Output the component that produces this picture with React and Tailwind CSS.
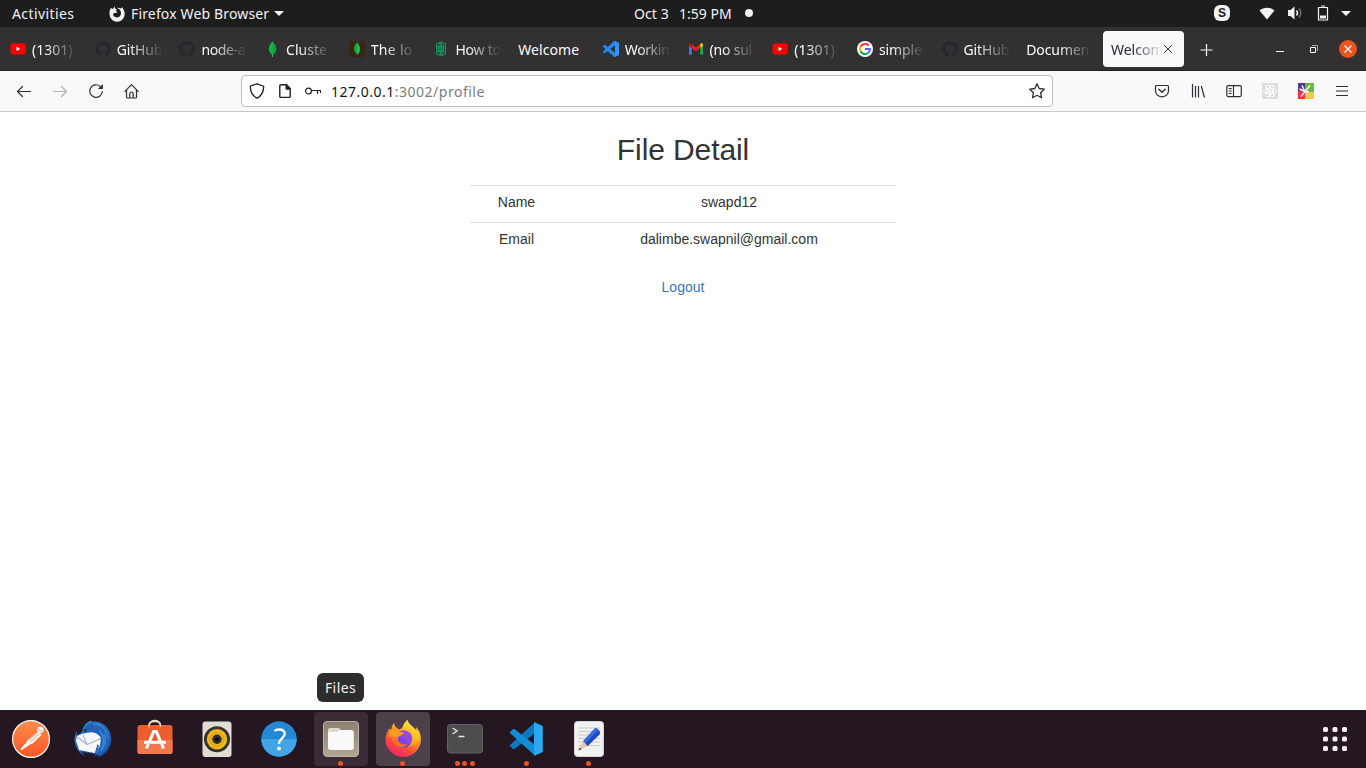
import React from "react";
import { FaGithub } from "react-icons/fa";

const VS_PATH =
  "M23.15 2.587L18.21.21a1.494 1.494 0 0 0-1.705.29l-9.46 8.63-4.12-3.128a.999.999 0 0 0-1.276.057L.327 7.261A1 1 0 0 0 .326 8.74L3.899 12 .326 15.26a1 1 0 0 0 .001 1.479L1.65 17.94a.999.999 0 0 0 1.276.057l4.12-3.128 9.46 8.63a1.492 1.492 0 0 0 1.704.29l4.942-2.377A1.5 1.5 0 0 0 24 20.06V3.939a1.5 1.5 0 0 0-.85-1.352zm-5.146 14.861L10.826 12l7.178-5.448v10.896z";

function Svg({ children, size = "size-4", box = "0 0 16 16" }) {
  return (
    <svg viewBox={box} className={`${size} block shrink-0`} fill="none">
      {children}
    </svg>
  );
}

/* ---------- favicons ---------- */
const Youtube = () => (
  <Svg>
    <rect x="0.500" y="2.200" width="15.300" height="11.400" rx="3" fill="#f00" />
    <path d="M6.500 5.800v4.200l3.800-2.100z" fill="#fff" />
  </Svg>
);
const Github = () => <FaGithub className="size-4 shrink-0 text-[#24292e]" />;
const Leaf = () => (
  <Svg>
    <path d="M8.500 .2C7.100 2.300 4.800 4.200 4.800 8c0 3 2 4.700 3.200 5.600L8.300 16h.6l.2-2.400C10.500 12.600 12.200 11 12.200 8 12.200 4.200 9.500 2.500 8.500 .2z" fill="#10b63c" />
    <path d="M8.500 .2v13.600C10.500 12.600 12.200 11 12.200 8 12.200 4.200 9.500 2.500 8.500 .2z" fill="#10a33c" />
    <path d="M8.300 13.200h.5l.1 2.800h-.6z" fill="#98a4a2" />
  </Svg>
);
const LeafDark = () => (
  <Svg>
    <path d="M0 0h16v16H0z" fill="#3a2517" />
    <path d="M8 1.200C6.700 3 5 5 5 8c0 2.500 1.600 4 2.700 4.800L8 15c.2-1 .2-2 .4-2.200C9.500 12 11 10.500 11 8c0-3-1.900-4.800-3-6.800z" fill="#13aa42" />
    <path d="M8 1.200V14c1.500-1.300 3-3 3-6 0-3-1.900-4.800-3-6.800z" fill="#0fc34a" />
  </Svg>
);
const Geeks = () => (
  <Svg>
    <path d="M7.700 1.500 3.700 2.800v10.400l4 1.300M8.300 1.500l4 1.300v10.400l-4 1.300M7.200 .8v14.400M8.800 .8v14.400M6.500 4.800l-1 .5v5.400l1 .5M9.500 4.800l1 .5v5.400l-1 .5" stroke="#12a066" strokeWidth="1.100" />
  </Svg>
);
const Code = () => (
  <Svg box="0 0 24 24">
    <path d={VS_PATH} fill="#2489f5" />
    <path d="m17 .3 1.200-.1 4.900 2.400a1.500 1.500 0 0 1 .9 1.400v16a1.500 1.500 0 0 1-.9 1.400l-4.900 2.400-1.200-.5 1-5.900V6.500z" fill="#3093ff" />
  </Svg>
);
const Gmail = () => (
  <Svg>
    <path d="M1 13.700h2.800V7L1 4.900z" fill="#5a6cff" />
    <path d="M12.200 13.700H15V4.900L12.200 7z" fill="#10b04b" />
    <path d="M3.800 7 8 10.200 12.200 7V3.300L8 6.500 3.800 3.300z" fill="#fa1b1f" />
    <path d="M1 5V3.500C1 2.300 2.400 1.800 3.300 2.700l.5.5V7L1 5z" fill="#c5121f" />
    <path d="M15 5V3.500c0-1.200-1.400-1.700-2.300-.8l-.5.5V7L15 5z" fill="#fbcc04" />
  </Svg>
);
const Google = () => (
  <Svg>
    <circle cx="8" cy="8" r="8" fill="#fff" />
    <path d="M3.500 5.700A5 5 0 0 1 11.700 4.500" stroke="#f33" strokeWidth="2" />
    <path d="M3.500 10.300a5 5 0 0 1 0-4.600" stroke="#fbbc04" strokeWidth="2" />
    <path d="M3.500 10.300A5 5 0 0 0 11 12" stroke="#10a84e" strokeWidth="2" />
    <path d="M8 8h5c0 1.700-.7 3.200-2 4" stroke="#5a64f8" strokeWidth="2" />
  </Svg>
);

const TABS = [
  [Youtube, "(1301)", "tracking-[0px]"],
  [Github, "GitHub", "tracking-[-0.15px]"],
  [Github, "node-a", "tracking-[-0.35px]"],
  [Leaf, "Cluste", "tracking-[0px]"],
  [LeafDark, "The lo", "tracking-[0.3px]"],
  [Geeks, "How to", "tracking-[-0.25px]"],
  [null, "Welcome", "tracking-[0.1px]"],
  [Code, "Workin", "tracking-[-0.4px]"],
  [Gmail, "(no sul", "tracking-[-0.2px]"],
  [Youtube, "(1301)", "tracking-[0px]"],
  [Google, "simple", "tracking-[-0.1px]"],
  [Github, "GitHub", "tracking-[-0.15px]"],
  [null, "Documen", "tracking-[-0.1px]"],
];

function Tab({ icon: Icon, label, tracking }) {
  let fade = "[mask-image:linear-gradient(to_right,#000_12px,transparent_46px)]";
  if (!Icon) fade = "[mask-image:linear-gradient(to_right,#000_32px,transparent_66px)]";
  if (label === "Welcome") fade = "";
  return (
    <div className="flex h-9 w-[84.69px] shrink-0 items-center gap-1.5 pr-[3px] pl-[10px] text-[#fbfbfb]">
      {Icon && <Icon />}
      <div className={`min-w-0 flex-1 pt-0.5 whitespace-nowrap ${fade} ${tracking}`}>{label}</div>
    </div>
  );
}

/* ---------- top panel ---------- */
function TopPanel() {
  return (
    <div className="flex h-[27px] shrink-0 items-center bg-[#1d1d1d] text-[14px] whitespace-nowrap text-[#f2f2f2]">
      <div className="w-[109px] shrink-0 pl-3 tracking-[0.4px]">Activities</div>
      <div className="flex w-[525px] shrink-0 items-center">
        <Svg>
          <path d="M5.300 0C5 1.500 4.700 2 4 2.900L2 2C.8 3.600.3 5.500.5 8.100a7.600 7.600 0 1 0 15.200 0c0-2-.6-3.800-1.700-5-.1-.8-.4-1.500-.8-2-.3 1-.8 1.400-1.500 1.500-1-.7-2-.9-3.500-.7 2 .7 3.400 2 3.700 4.300.4 3-1.400 5.200-3.900 5.200-2.300 0-3.900-1.500-3.900-3.100 0-.9.800-1.500 1.700-1.400 1 .2 2 .1 2.700-.8-.8-.2-1.500-.6-1.700-1.300.3-.6 1-.8 1-1.600-1.300 0-2-.9-2.500-3.200z" fill="#f2f2f2" />
        </Svg>
        <span className="ml-[6px] w-[143px] tracking-[0.15px]">Firefox Web Browser</span>
        <Svg size="h-[5px] w-[10px]" box="0 0 10 5">
          <path d="M0 0h10L5 5z" fill="#f2f2f2" />
        </Svg>
      </div>
      <span className="w-[45px] shrink-0 pb-px tracking-[0.1px]">Oct 3</span>
      <span className="w-[66px] shrink-0 pb-px">1:59 PM</span>
      <span className="mb-px size-2 shrink-0 rounded-full bg-[#f2f2f2]" />
      <div className="ml-auto flex items-center pr-[15px]">
        <div className="mb-px flex size-4 items-center justify-center rounded-[6px] bg-[#f2f2f2] font-['Liberation_Sans',sans-serif] text-[12px] font-bold text-[#1d1d1d]">S</div>
        <div className="ml-[29px]">
          <Svg>
            <path d="M.5 4.500C4.500.8 11.500.8 15.500 4.500L8 13.500z" fill="#f2f2f2" />
          </Svg>
        </div>
        <div className="ml-3 mb-px">
          <Svg>
            <path d="M1 5h2.500L7.500 1.500v13L3.500 11H1z" fill="#f2f2f2" />
            <path d="M9.500 5.500q2 2.500 0 5" stroke="#f2f2f2" strokeWidth="1.500" />
            <path d="M12 3.500q3.500 4.500 0 9" stroke="#777" strokeWidth="1.300" />
          </Svg>
        </div>
        <div className="ml-3 mb-px">
          <Svg>
            <path d="M3.500 2.500h9v12.500h-9zM6 1h4" stroke="#f2f2f2" strokeWidth="1.200" />
            <path d="M5 10.500h6v3H5z" fill="#f2f2f2" />
          </Svg>
        </div>
        <div className="ml-[10px]">
          <Svg size="h-[5px] w-[10px]" box="0 0 10 5">
            <path d="M0 0h10L5 5z" fill="#f2f2f2" />
          </Svg>
        </div>
      </div>
    </div>
  );
}

function TabStrip() {
  return (
    <div className="flex h-11 shrink-0 items-center border-b border-[#211e1f] bg-[#333031] text-[14px]">
      {TABS.map(([icon, label, tracking], i) => (
        <Tab key={i} icon={icon} label={label} tracking={tracking} />
      ))}
      <div className="ml-[2px] flex h-9 w-[81px] shrink-0 items-center rounded bg-[#f9f9fb] pl-2 text-[#2a2a2e]">
        <div className="w-[52px] pt-0.5 whitespace-nowrap [mask-image:linear-gradient(to_right,#000_22px,transparent_52px)]">Welcom</div>
        <Svg size="size-[10px]" box="0 0 10 10">
          <path d="m1.200 1.200 7.600 7.600m0-7.600-7.600 7.600" stroke="#333" strokeWidth="1" />
        </Svg>
      </div>
      <div className="flex flex-1 items-center pl-[14px]">
        <div className="mt-0.5">
          <Svg>
            <path d="M8.500 2v12M2.500 8h12" stroke="#fbfbfb" strokeWidth="1.200" />
          </Svg>
        </div>
        <div className="ml-[58px]">
          <Svg>
            <path d="M4 10.500h8" stroke="#fbfbfb" />
          </Svg>
        </div>
        <div className="ml-[18px]">
          <Svg>
            <path d="M4.500 6.500h5v5h-5z" stroke="#fbfbfb" />
            <path d="M6 4.500h5.500V10" stroke="#aaa" />
          </Svg>
        </div>
        <div className="ml-[17px] flex size-[18px] items-center justify-center rounded-full bg-[#e95420]">
          <Svg size="size-[10px]" box="0 0 10 10">
            <path d="m1.500 1.500 7 7m0-7-7 7" stroke="#fff" strokeWidth="1.200" />
          </Svg>
        </div>
      </div>
    </div>
  );
}

function Slot({ children }) {
  return <div className="flex w-9 justify-center">{children}</div>;
}

function Toolbar() {
  const s = "#2e2e33";
  return (
    <div className="flex h-[41px] shrink-0 items-center border-b border-[#c8c8c9] bg-[#f9f9fa]">
      <div className="flex w-[241px] pl-[6px]">
        <Slot>
          <Svg><path d="M14.500 8.500H1.500M6.500 3.500l-5 5 5 5" stroke={s} strokeWidth="1.200" strokeLinecap="round" strokeLinejoin="round" /></Svg>
        </Slot>
        <Slot>
          <Svg><path d="M1.500 8.500h13M9.500 3.500l5 5-5 5" stroke="#b1b1b5" strokeWidth="1.200" strokeLinecap="round" strokeLinejoin="round" /></Svg>
        </Slot>
        <Slot>
          <Svg>
            <path d="M14.300 8.500A6.300 6.300 0 1 1 12 3.200" stroke={s} strokeWidth="1.200" strokeLinecap="round" />
            <path d="M14.900 1v5h-5z" fill={s} />
          </Svg>
        </Slot>
        <Slot>
          <Svg><path d="m.9 8.300 6.600-6.600 6.600 6.600M2.500 7v7c0 .7.400 1 1 1h8c.6 0 1-.3 1-1V7M5.800 15v-4c0-1.300.6-2 1.700-2s1.700.7 1.700 2v4" stroke={s} strokeWidth="1.200" strokeLinecap="round" strokeLinejoin="round" /></Svg>
        </Slot>
      </div>
      <div className="flex h-8 w-[812px] items-center rounded-[4px] border border-[#bfbfc3] bg-white px-[7px] text-[14px]">
        <Svg><path d="M8 .8 14 3c.5 0 .7.400.7.900C14.500 9 12.500 13 8 15.200 3.500 13 1.500 9 1.300 3.900c0-.5.2-.8.7-1z" stroke="#222" strokeWidth="1.300" strokeLinejoin="round" /></Svg>
        <div className="ml-3">
          <Svg>
            <path d="M3.800 1.700h5.700l3.700 3.800v8c0 .6-.3.900-.9.900H3.700c-.6 0-.9-.3-.9-.9V2.600c0-.6.400-.9 1-.9z" stroke="#222" strokeWidth="1.400" />
            <path d="M9 1.500v4.700h4.700z" fill="#222" stroke="#222" />
          </Svg>
        </div>
        <div className="ml-3">
          <Svg>
            <circle cx="3.500" cy="8" r="2.900" stroke="#222" strokeWidth="1.200" />
            <path d="M6.500 7.500h9v2.500M12.500 7.500V11" stroke="#222" strokeWidth="1.200" />
          </Svg>
        </div>
        <div className="ml-[10px] flex-1 tracking-[0.5px] whitespace-nowrap text-[#7c7c80]">
          <span className="text-[#15141a]">127.0.0.1</span>:3002/profile
        </div>
        <Svg><path d="m8 .9 2.200 4.600 5 .7-3.600 3.500.9 5L8 12.300l-4.500 2.400.9-5L.8 6.200l5-.7z" stroke={s} strokeWidth="1.300" strokeLinejoin="round" /></Svg>
      </div>
      <div className="ml-auto flex pr-[6px]">
        <Slot>
          <Svg>
            <path d="M2.500 2.500h11c.6 0 1 .4 1 1v4c0 4-2.700 6.300-6.500 6.300S1.500 11.500 1.500 7.500v-4c0-.6.4-1 1-1z" stroke={s} strokeWidth="1.200" />
            <path d="m4.800 6.300 3.200 3 3.200-3" stroke={s} strokeWidth="1.400" strokeLinecap="round" strokeLinejoin="round" />
          </Svg>
        </Slot>
        <Slot>
          <Svg><path d="M2.500 1v13.500M5.500 3v11.500M8.500 3v11.500M11.300 3l3.200 11.500" stroke={s} strokeWidth="1.200" /></Svg>
        </Slot>
        <Slot>
          <Svg>
            <rect x=".8" y="2.600" width="14.500" height="11" rx="1.500" stroke={s} strokeWidth="1.200" />
            <path d="M7.500 2.600v11M2.700 5.500h3M2.700 8h3M2.700 10.500h3" stroke={s} strokeWidth="1.100" />
          </Svg>
        </Slot>
        <Slot>
          <Svg>
            <path d="M0 0h16v16H0z" fill="#dddde0" />
            <g stroke="#fff" strokeWidth="1">
              <ellipse cx="8" cy="8" rx="6.500" ry="2.500" />
              <ellipse cx="8" cy="8" rx="6.500" ry="2.500" transform="rotate(60 8 8)" />
              <ellipse cx="8" cy="8" rx="6.500" ry="2.500" transform="rotate(120 8 8)" />
            </g>
            <circle cx="8" cy="8" r="1.300" fill="#fff" />
          </Svg>
        </Slot>
        <Slot>
          <Svg>
            <path d="M0 0h7v9H0z" fill="#503a91" />
            <path d="M7 0h9v9H7z" fill="#6cb83a" />
            <path d="M0 8h7v8H0z" fill="#ef3340" />
            <path d="M7 9h9v7H7z" fill="#f3c64c" />
            <path d="m7 8.500 5-6M7 8.500 4 2.500M7 8.500 1.500 6M7 8.500l-4 5M7 8.500l4 .5" stroke="#fff" strokeWidth="1.400" />
          </Svg>
        </Slot>
        <Slot>
          <Svg><path d="M2 3.500h12M2 8h12M2 12.500h12" stroke={s} strokeWidth="1.200" /></Svg>
        </Slot>
      </div>
    </div>
  );
}

function Page() {
  return (
    <main className="flex flex-1 flex-col items-center bg-white pt-[21px] font-['Liberation_Sans',sans-serif] text-[14px] leading-5 text-[#333]">
      <h2 className="mb-[19px] text-[30px] leading-[33px] tracking-[-0.1px]">File Detail</h2>
      <table className="mb-[17px] w-[426px] table-fixed border-collapse text-center">
        <colgroup>
          <col className="w-[93px]" />
          <col />
        </colgroup>
        <tbody>
          <tr className="border-t border-[#ddd]">
            <td className="h-[37px] pb-1">Name</td>
            <td className="pr-px pb-1">swapd12</td>
          </tr>
          <tr className="border-t border-[#ddd]">
            <td className="h-[37px] pb-1">Email</td>
            <td className="pr-px pb-1">dalimbe.swapnil@gmail.com</td>
          </tr>
        </tbody>
      </table>
      <a className="text-[#337ab7]">Logout</a>
    </main>
  );
}

/* ---------- dock icons, each on a 40px board ---------- */
const DockSvg = ({ children }) => (
  <Svg size="size-10" box="0 0 40 40">{children}</Svg>
);
const Postman = () => (
  <DockSvg>
    <defs><linearGradient id="pm" x2="0" y2="1"><stop stopColor="#ff8e4b" /><stop offset="1" stopColor="#fd5527" /></linearGradient></defs>
    <circle cx="20" cy="20" r="18.400" fill="url(#pm)" stroke="#fff" strokeWidth="1.200" />
    <circle cx="29.300" cy="11" r="3.200" fill="#fff" />
    <path d="M27 12.500 30.500 16 21 25l-5.500-.5.5-3z" fill="#fff" />
    <path d="m17 23-7 7.500 9-6" stroke="#fff" strokeWidth="1.800" />
    <path d="m28 15-9 8.300m-1.500-1.800 9-8M26.800 9.500l4.700 4" stroke="#ff7040" strokeWidth=".8" />
  </DockSvg>
);
const Thunderbird = () => (
  <DockSvg>
    <defs><linearGradient id="tb" x1=".2" x2=".8" y2="1"><stop stopColor="#2a8fdc" /><stop offset=".5" stopColor="#2465bd" /><stop offset="1" stopColor="#123e8c" /></linearGradient></defs>
    <path d="M10 9C12 4.500 15 2 19 1.500l-1 1.300C26 1 34 6 37 13c2.500 7 1.500 14-3 19.500-2.500 3-5.500 5-9.500 6l2-2.500-6 1.500 2.500-2.500L9 33l3 4C5 34 1.500 27 1.500 20c0-3 1-6 2.500-8l-.5 5L9 13z" fill="url(#tb)" />
    <path d="M12 13.800 22.500 12.500 30 16.500 27 27l-3 7.500L6 31l-1.500-5-1.500-4 1-5z" fill="#f6f7fa" />
    <path d="m4.500 18 9.500 7.500 14-6M14 25.500 10 16" stroke="#a9b4c6" strokeWidth="1.100" />
    <path d="M10.500 14.500C10.500 9 13.500 4.500 20 3.500c9 0 17 8 16.500 18-.5 6.500-4.500 12-10.500 15.500l-1.500-3C27 29 28 24 27.500 18c-4-5-10-5.500-15.500-3.800z" fill="#2263b8" />
    <path d="M20 5c8-.5 14 6 15 14M26 11c5 5 6 13 2 21M31 15c3 7 1 12-3 17" stroke="#328ad7" strokeWidth="1.400" />
    <path d="m10.500 12.500 1.500-2.500 2 1-1.500 1.500z" fill="#17274a" />
    <path d="m24.500 25 2 2.500-1.500 1 1.500 2-2 1 .5 2.500-3.500 1z" fill="#2263b8" />
  </DockSvg>
);
const Software = () => (
  <DockSvg>
    <path d="M14 9V6.500C14 0 25.500 0 25.500 6.500V9" stroke="#f1d7b3" strokeWidth="1.700" />
    <rect x="2.500" y="6" width="35" height="29" rx="2.500" fill="#ed5e2d" />
    <path d="M2.500 21h35v11.500a2.500 2.500 0 0 1-2.500 2.500H5a2.500 2.500 0 0 1-2.500-2.500z" fill="#f1784d" />
    <path d="M14 8.500V6.500C14 1 25.500 1 25.500 6.500v1.500" stroke="#f1d7b3" strokeWidth="1.500" />
    <path d="M14.500 22.500 18.700 12.500h2.600l4.200 10M13.300 25 11.500 29.500M26.700 25l1.800 4.500" stroke="#fff" strokeWidth="3.200" />
    <path d="M9 23.300h22" stroke="#fff" strokeWidth="3" />
  </DockSvg>
);
const Rhythmbox = () => (
  <DockSvg>
    <rect x="5.500" y="2.500" width="29" height="35.500" rx="3" fill="#e2ddd3" />
    <circle cx="20" cy="20.300" r="13" fill="#34332f" />
    <circle cx="20" cy="20.300" r="10.200" fill="#f0b81c" />
    <circle cx="20" cy="20.300" r="6.800" stroke="#d49c12" strokeWidth="1" />
    <circle cx="20" cy="20.300" r="4.700" fill="#2c2c29" />
    <circle cx="20" cy="20.300" r="1.800" fill="#060606" />
  </DockSvg>
);
const Help = () => (
  <DockSvg>
    <circle cx="20" cy="20" r="17.700" fill="#2389d5" />
    <path d="M2.300 20h35.400a17.700 17.700 0 0 1-35.400 0z" fill="#43a4e3" />
    <path d="M15.500 12c1-1 2.500-1.500 4.500-1.500 4 0 5.700 2 5.700 4.500 0 4-5.700 4.500-5.700 10" stroke="#fff" strokeWidth="2.400" />
    <circle cx="20" cy="29.500" r="1.900" fill="#fff" />
  </DockSvg>
);
const Files = () => (
  <DockSvg>
    <defs><linearGradient id="fl" x2="0" y2="1"><stop stopColor="#8b8170" /><stop offset="1" stopColor="#b0a694" /></linearGradient></defs>
    <rect x="2.500" y="2.500" width="35" height="35" rx="3.500" fill="url(#fl)" stroke="#bbb29f" />
    <path d="M7 14V11c0-1 .7-2 2-2h8c1.500 0 2 1.500 3 2h10c2 0 2.500 1 2.500 3z" fill="#ddd8c9" />
    <path d="M7 14.500c0-1.200.8-1.800 2-1.800h7c1.500 0 2.500-1.700 4-1.700h10c2 0 2.800 1 2.800 2.500v15c0 1.500-1 2.500-2.500 2.500h-21C8 31 7 30 7 28.500z" fill="#fafafa" />
  </DockSvg>
);
const Firefox = () => (
  <DockSvg>
    <defs>
      <linearGradient id="fx" x1=".8" x2=".25" y2="1"><stop stopColor="#ffe43b" /><stop offset=".4" stopColor="#ff9a26" /><stop offset=".7" stopColor="#ff4b3f" /><stop offset="1" stopColor="#ed206d" /></linearGradient>
      <linearGradient id="fp" x1="1" x2="0" y2="1"><stop stopColor="#ad46ff" /><stop offset="1" stopColor="#5448c7" /></linearGradient>
      <linearGradient id="fy" x1=".6" x2=".3" y2="1"><stop stopColor="#ffe83f" /><stop offset=".55" stopColor="#ffbd27" /><stop offset="1" stopColor="#ff8226" /></linearGradient>
    </defs>
    <path d="M24.500 1c-5 4-4 8-8 9.500C13 9 11.500 7 11 4c-2 2-2.500 4-2.500 6.500C7 10.700 6.500 9.500 6.500 9.500 3.500 13 2.500 17 2.500 20.500c0 9.500 8 17.500 17.800 17.500S38 30 38 20c0-5-2-9-5-12l.5 4C31.500 8 25.500 6 24.500 1z" fill="url(#fx)" />
    <circle cx="20.700" cy="20" r="8.800" fill="url(#fp)" />
    <path d="M6.500 12c3-2.500 7-2 10 .5 1.500.5 4 .5 4.500 1.500-1 2.500-4 3-6 4-1 6 5 9 9 6.500 0 4-8 5-12.500.5-2.500-3-3.500-8-1-11z" fill="#ff751f" />
    <path d="M8.500 10c4-1 7 3 12 4-2 2-5 3-7 4.500-3-1.500-7-1.500-8 .5 0-4 1-7 3-9z" fill="#ff9b20" />
    <path d="M24.500 1c-4 3-5 7-3 9.500 3 1.500 5 1.500 7 4.500 2 5 0 10-4 13.500 6-1 10.500-4 11.500-9 .5-4-.5-7-2.500-8-2.500-3-8-5.500-9-10.500z" fill="url(#fy)" />
  </DockSvg>
);
const Terminal = () => (
  <DockSvg>
    <rect x="2.500" y="5.500" width="35" height="28.500" rx="3" fill="#4c4c4b" stroke="#646262" />
    <path d="m7.500 9 4.500 3-4.500 3M13.500 17.500h6" stroke="#e6e6e6" strokeWidth="1.400" />
  </DockSvg>
);
const VSCode = () => (
  <DockSvg>
    <path d="M28 3.300 3.500 25.500c-.7.700-.7 1.300 0 2L6 29.700c.5.400 1.300.4 1.800 0L28 14z" fill="#0879bd" />
    <path d="M28 36.700 3.500 14.500c-.7-.7-.7-1.300 0-2L6 10.300c.5-.4 1.300-.4 1.800 0L28 26z" fill="#128cd4" />
    <path d="m27 3 8.800 4v26L27 37z" fill="#29a9f2" />
  </DockSvg>
);
const Editor = () => (
  <DockSvg>
    <rect x="5.500" y="2.500" width="29" height="35" rx="3" fill="#f1f1f0" stroke="#d4d4d4" />
    <path d="M9.500 9h21M9.500 12.500h21M9.500 16h21M9.500 19.500h21M9.500 23h21M9.500 26.500h21" stroke="#c5c5c5" strokeWidth=".9" />
    <path d="m14 22.500 4.500 4.500-9 4.500z" fill="#eac6a4" />
    <path d="m9.500 31.500 1.300-3 1.700 1.700z" fill="#333" />
    <path d="m14 22 11.500-12.500c1-1 1.700-1 2.600-.2l2.500 2.500c.7.700.7 1.500 0 2.300L18.700 27z" fill="#356bdf" />
    <path d="m16.500 24.500 12-13 2.100 2c.6.600.5 1.200 0 1.900L18.700 27z" fill="#204aba" />
  </DockSvg>
);

const DOCK = [
  [Postman, 0, ""],
  [Thunderbird, 0, ""],
  [Software, 0, ""],
  [Rhythmbox, 0, ""],
  [Help, 0, ""],
  [Files, 1, "bg-[#392c37]"],
  [Firefox, 1, "bg-[#4c404a]"],
  [Terminal, 3, ""],
  [VSCode, 1, ""],
  [Editor, 1, ""],
];

function Dock() {
  return (
    <div className="flex h-[58px] shrink-0 items-center gap-2 bg-[#241721] px-1">
      {DOCK.map(([Icon, dots, bg], i) => (
        <div key={i} className={`flex h-[54px] w-[54px] flex-col items-center rounded pt-[7px] ${bg}`}>
          <Icon />
          <div className="mt-[2px] mr-px flex gap-[2.5px]">
            {Array.from({ length: dots }, (_, n) => (
              <span key={n} className="size-[5px] rounded-full bg-[#e95420]" />
            ))}
          </div>
        </div>
      ))}
      <div className="ml-auto flex w-[54px] justify-center">
        <Svg size="size-6" box="0 0 24 24">
          {[0, 9.5, 19].map((y) =>
            [0, 9.5, 19].map((x) => (
              <rect key={`${x}-${y}`} x={x} y={y} width="5" height="5" rx="1.5" fill="#f2f0ee" />
            ))
          )}
        </Svg>
      </div>
    </div>
  );
}

export default function App() {
  return (
    <div className="relative flex h-[768px] w-[1366px] flex-col overflow-hidden font-['Noto_Sans',sans-serif]">
      <TopPanel />
      <TabStrip />
      <Toolbar />
      <Page />
      <Dock />
      <div className="absolute top-[673px] left-[317px] flex h-[29px] w-[47px] items-center justify-center rounded-[6px] bg-[#2d2d2d] text-[14px] tracking-[0.4px] text-[#f2f2f2]">Files</div>
    </div>
  );
}
